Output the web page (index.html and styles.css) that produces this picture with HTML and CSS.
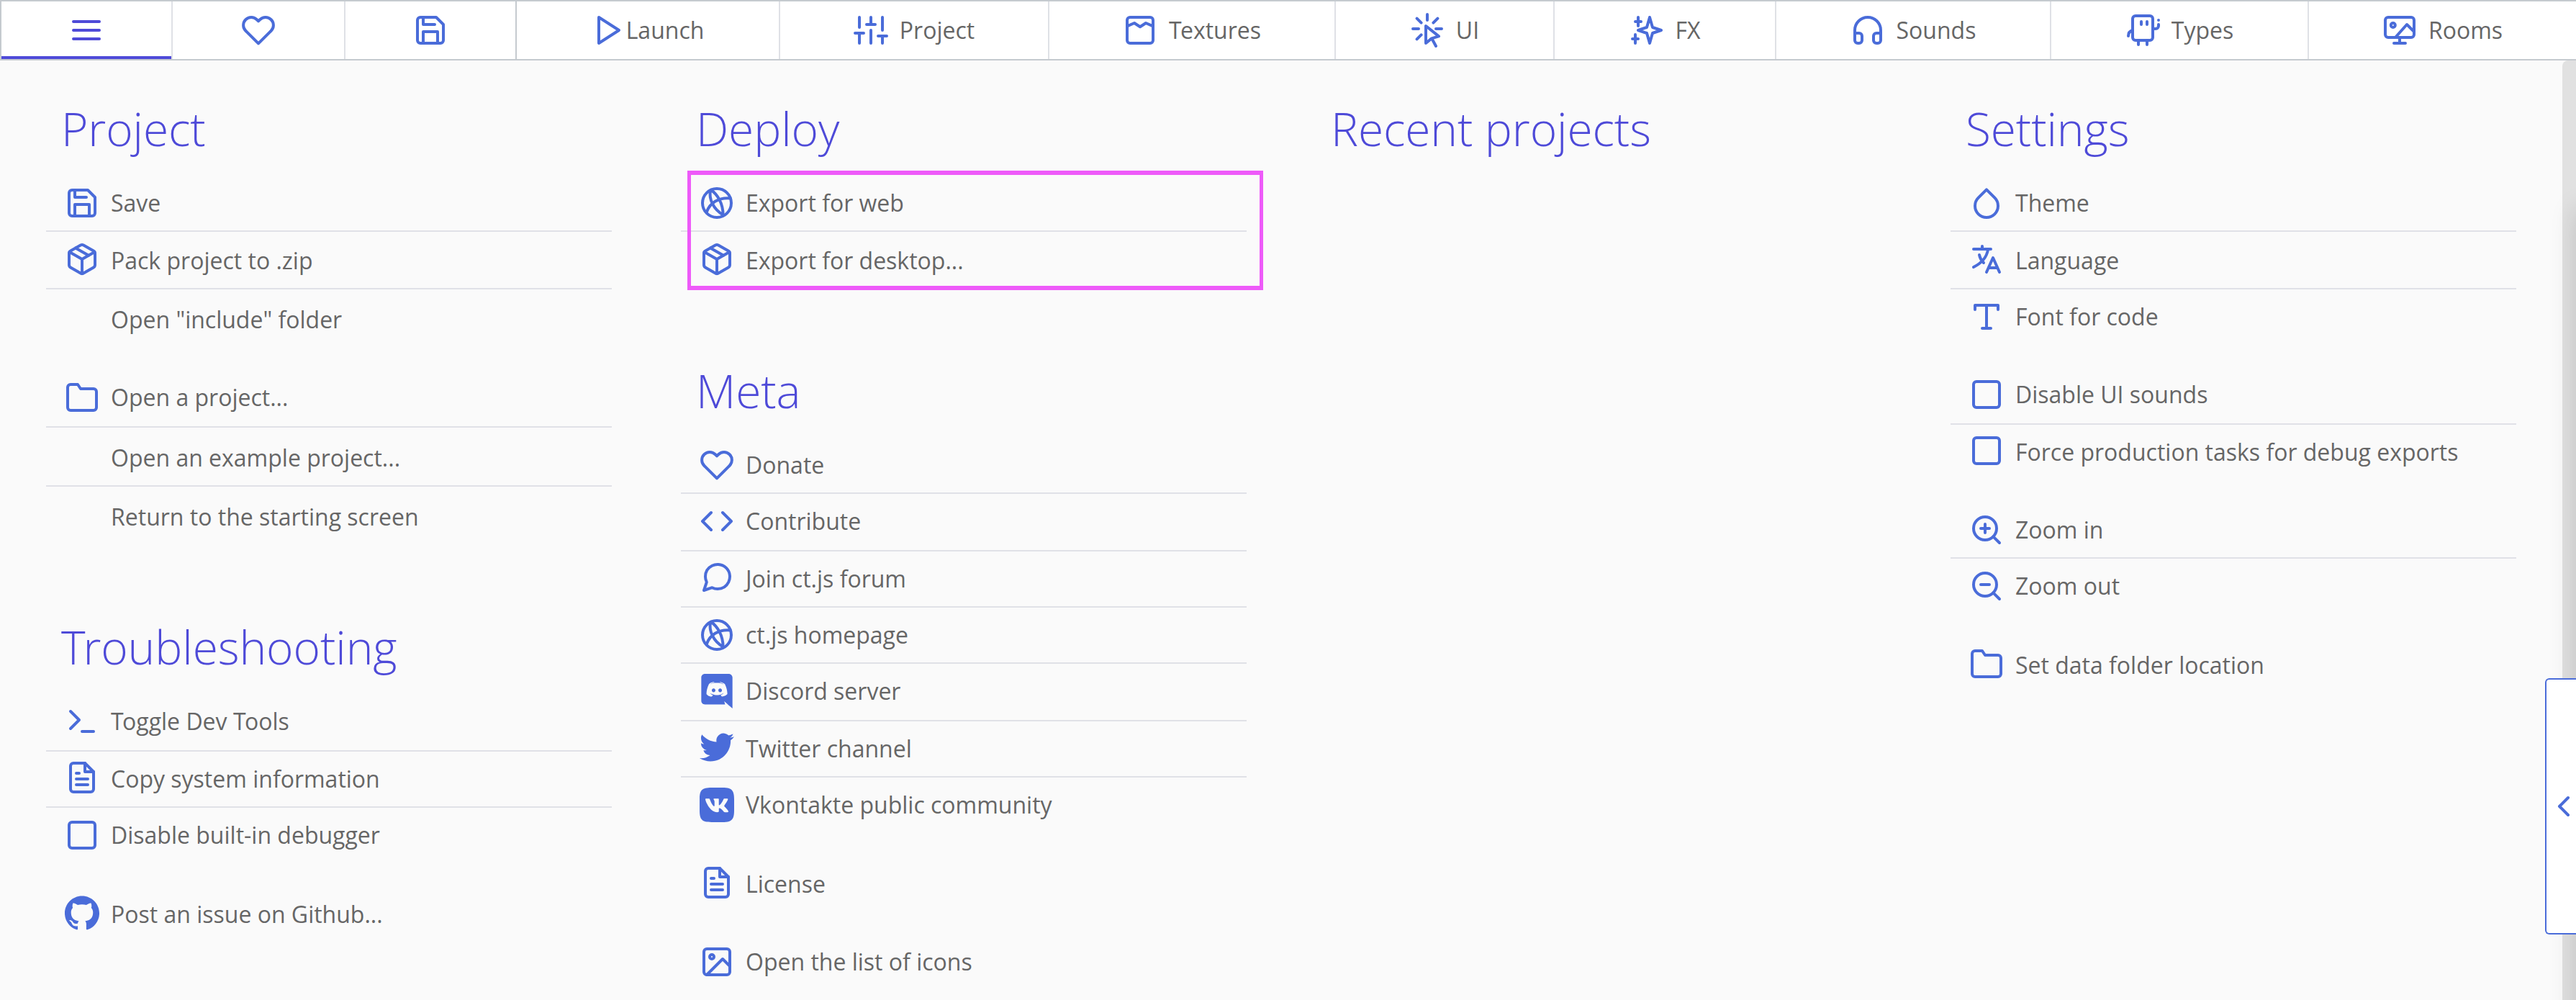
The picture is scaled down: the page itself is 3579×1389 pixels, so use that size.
FILE: index.html
```html
<!DOCTYPE html>
<html lang="en">
<head>
<meta charset="utf-8">
<title>ct.js</title>
<link rel="stylesheet" href="styles.css">
</head>
<body>
<svg class="sprite" aria-hidden="true">
  <symbol id="menu" viewBox="0 0 24 24"><path d="M3 12h18M3 6h18M3 18h18"/></symbol>
  <symbol id="heart" viewBox="0 0 24 24"><path d="M20.84 4.61a5.5 5.5 0 0 0-7.78 0L12 5.67l-1.06-1.06a5.5 5.5 0 0 0-7.78 7.78l1.06 1.06L12 21.23l7.78-7.78 1.06-1.06a5.5 5.5 0 0 0 0-7.78z"/></symbol>
  <symbol id="save" viewBox="0 0 24 24"><path d="M19 21H5a2 2 0 0 1-2-2V5a2 2 0 0 1 2-2h11l5 5v11a2 2 0 0 1-2 2z"/><path d="M17 21v-8H7v8M7 3v5h8"/></symbol>
  <symbol id="play" viewBox="0 0 24 24"><path d="M5 3l14 9-14 9z"/></symbol>
  <symbol id="sliders" viewBox="0 0 24 24"><path d="M4 21v-7M4 10V3M12 21v-9M12 8V3M20 21v-5M20 12V3M1 14h6M9 8h6M17 16h6"/></symbol>
  <symbol id="texture" viewBox="0 0 24 24"><rect x="3" y="3" width="18" height="18" rx="2"/><path d="M3 9.2l5-2.2 4 2.6L16 7l5 2.2"/></symbol>
  <symbol id="ui" viewBox="0 0 24 24"><path d="M12 1v4M2 11h4M18 11h4M4.8 3.8l3 3M19.2 3.8l-3 3M4.8 18.2l3-3M11 9v12l4-3.3 5-1.5zM15.3 18L18 23"/></symbol>
  <symbol id="sparkles" viewBox="0 0 24 24"><path d="M14 3l2 7 6 2-6 2-2 7-2-7-6-2 6-2zM6 3v6M4 6h4M4 15v6M2 18h4"/></symbol>
  <symbol id="headphones" viewBox="0 0 24 24"><path d="M3 18v-6a9 9 0 0 1 18 0v6"/><path d="M21 19a2 2 0 0 1-2 2h-1a2 2 0 0 1-2-2v-3a2 2 0 0 1 2-2h3zM3 19a2 2 0 0 0 2 2h1a2 2 0 0 0 2-2v-3a2 2 0 0 0-2-2H3z"/></symbol>
  <symbol id="type-char" viewBox="0 0 24 24"><rect x="5" y="2" width="14" height="17" rx="2"/><path d="M11 6v2M15 6v2M9 19v3M15 19v3M5 12c-2 .6-3 1.8-3 4M19 11h2a2 2 0 0 0 2-2V8M23 5v.01"/></symbol>
  <symbol id="room" viewBox="0 0 24 24"><rect x="2" y="3" width="20" height="14" rx="2"/><circle cx="7.4" cy="8.5" r="1.5"/><path d="M9 17l8-9 5 5M12 17v4M8 21h8"/></symbol>
  <symbol id="package" viewBox="0 0 24 24"><path d="M16.5 9.4l-9-5.19M21 16V8a2 2 0 0 0-1-1.73l-7-4a2 2 0 0 0-2 0l-7 4A2 2 0 0 0 3 8v8a2 2 0 0 0 1 1.73l7 4a2 2 0 0 0 2 0l7-4A2 2 0 0 0 21 16z"/><path d="M3.27 6.96L12 12.01l8.73-5.05M12 22.08V12"/></symbol>
  <symbol id="folder" viewBox="0 0 24 24"><path d="M22 19a2 2 0 0 1-2 2H4a2 2 0 0 1-2-2V5a2 2 0 0 1 2-2h5l2 3h9a2 2 0 0 1 2 2z"/></symbol>
  <symbol id="terminal" viewBox="0 0 24 24"><path d="M4 17l6-6-6-6M12 19h8"/></symbol>
  <symbol id="file" viewBox="0 0 24 24"><path d="M14 2H6a2 2 0 0 0-2 2v16a2 2 0 0 0 2 2h12a2 2 0 0 0 2-2V8z"/><path d="M14 2v6h6M16 13H8M16 17H8M10 9H8"/></symbol>
  <symbol id="square" viewBox="0 0 24 24"><rect x="3" y="3" width="18" height="18" rx="2"/></symbol>
  <symbol id="globe" viewBox="0 0 24 24"><circle cx="12" cy="12" r="10"/><path d="M7.6 3.1C6.2 9 9.600 16.500 16.300 20.200M8 3c4.500 3 8.300 9.500 8.300 17.200M4.800 18.500C7 12 13 8 21.300 8.700"/></symbol>
  <symbol id="code" viewBox="0 0 24 24"><path d="M16 18l6-6-6-6M8 6l-6 6 6 6"/></symbol>
  <symbol id="message" viewBox="0 0 24 24"><path d="M21 11.5a8.38 8.38 0 0 1-.9 3.8 8.5 8.5 0 0 1-7.6 4.7 8.38 8.38 0 0 1-3.8-.9L3 21l1.900-5.700a8.380 8.380 0 0 1-.9-3.800 8.500 8.500 0 0 1 4.700-7.600 8.380 8.380 0 0 1 3.800-.9h.5a8.480 8.480 0 0 1 8 8v.5z"/></symbol>
  <symbol id="image" viewBox="0 0 24 24"><rect x="3" y="3" width="18" height="18" rx="2"/><circle cx="8.5" cy="8.5" r="1.5"/><path d="M21 15l-5-5L5 21"/></symbol>
  <symbol id="droplet" viewBox="0 0 24 24"><path d="M12 2.69l5.66 5.66a8 8 0 1 1-11.310 0z"/></symbol>
  <symbol id="translate" viewBox="0 0 24 24"><path d="M3 5h12M9 3v2M13 5.500C12 11 8 15 3 17.500M7 9c.5 2.500 1.500 4 3 5.500M12 21l4.500-10L21 21M13.300 18h6.400"/></symbol>
  <symbol id="font" viewBox="0 0 24 24"><path d="M4 7V4h16v3M9 20h6M12 4v16"/></symbol>
  <symbol id="zoom-in" viewBox="0 0 24 24"><circle cx="11" cy="11" r="8"/><path d="M21 21l-4.350-4.350M11 8v6M8 11h6"/></symbol>
  <symbol id="zoom-out" viewBox="0 0 24 24"><circle cx="11" cy="11" r="8"/><path d="M21 21l-4.350-4.350M8 11h6"/></symbol>
  <symbol id="chevron-left" viewBox="0 0 24 24"><path d="M15 18l-6-6 6-6"/></symbol>
  <symbol id="github" viewBox="0 0 24 24"><path d="M12 .297c-6.630 0-12 5.373-12 12 0 5.303 3.438 9.800 8.205 11.385.6.113.820-.258.820-.577 0-.285-.010-1.040-.015-2.040-3.338.724-4.042-1.610-4.042-1.610C4.422 18.070 3.633 17.700 3.633 17.700c-1.087-.744.084-.729.084-.729 1.205.084 1.838 1.236 1.838 1.236 1.070 1.835 2.809 1.305 3.495.998.108-.776.417-1.305.760-1.605-2.665-.3-5.466-1.332-5.466-5.930 0-1.310.465-2.380 1.235-3.220-.135-.303-.540-1.523.105-3.176 0 0 1.005-.322 3.300 1.230.960-.267 1.980-.399 3-.405 1.020.006 2.040.138 3 .405 2.280-1.552 3.285-1.230 3.285-1.230.645 1.653.240 2.873.120 3.176.765.840 1.230 1.910 1.230 3.220 0 4.610-2.805 5.625-5.475 5.920.420.360.810 1.096.810 2.220 0 1.606-.015 2.896-.015 3.286 0 .315.210.690.825.570C20.565 22.092 24 17.592 24 12.297c0-6.627-5.373-12-12-12"/></symbol>
  <symbol id="discord" viewBox="0 0 24 24"><path d="M20.222 0c1.406 0 2.540 1.137 2.607 2.475V24l-2.677-2.273-1.470-1.338-1.604-1.398.670 2.205H3.710c-1.402 0-2.540-1.065-2.540-2.476V2.480C1.170 1.142 2.310.003 3.715.003h16.500L20.222 0zm-6.118 5.683h-.030l-.202.200c2.073.600 3.076 1.537 3.076 1.537-1.336-.668-2.540-1.002-3.744-1.137-.870-.135-1.740-.064-2.475 0h-.200c-.470 0-1.470.200-2.810.735-.467.203-.735.336-.735.336s1.002-1.002 3.210-1.537l-.135-.135s-1.672-.064-3.477 1.270c0 0-1.805 3.144-1.805 7.020 0 0 1 1.740 3.743 1.806 0 0 .400-.533.805-1.002-1.540-.468-2.140-1.404-2.140-1.404s.134.066.335.200h.060c.030 0 .044.015.060.030v.006c.016.016.030.030.060.030.330.136.660.270.930.400.466.202 1.065.403 1.800.536.930.135 1.996.200 3.210 0 .600-.135 1.200-.267 1.800-.535.390-.200.870-.400 1.397-.737 0 0-.600.936-2.205 1.404.330.466.795 1 .795 1 2.744-.060 3.810-1.800 3.870-1.726 0-3.870-1.815-7.020-1.815-7.020-1.635-1.214-3.165-1.260-3.435-1.260l.056-.020zm.168 4.413c.703 0 1.270.600 1.270 1.335 0 .740-.570 1.340-1.270 1.340-.700 0-1.270-.600-1.270-1.334.002-.740.573-1.338 1.270-1.338zm-4.543 0c.700 0 1.266.600 1.266 1.335 0 .740-.570 1.340-1.270 1.340-.700 0-1.270-.600-1.270-1.334 0-.740.570-1.338 1.270-1.338z"/></symbol>
  <symbol id="twitter" viewBox="0 0 24 24"><path d="M23.953 4.570a10 10 0 0 1-2.825.775 4.958 4.958 0 0 0 2.163-2.723c-.951.555-2.005.959-3.127 1.184a4.920 4.920 0 0 0-8.384 4.482C7.690 8.095 4.067 6.130 1.640 3.162a4.822 4.822 0 0 0-.666 2.475c0 1.710.870 3.213 2.188 4.096a4.904 4.904 0 0 1-2.228-.616v.060a4.923 4.923 0 0 0 3.946 4.827 4.996 4.996 0 0 1-2.212.085 4.936 4.936 0 0 0 4.604 3.417 9.867 9.867 0 0 1-6.102 2.105c-.390 0-.779-.023-1.170-.067a13.995 13.995 0 0 0 7.557 2.209c9.053 0 13.998-7.496 13.998-13.985 0-.210 0-.420-.015-.630A9.935 9.935 0 0 0 24 4.590z"/></symbol>
  <symbol id="vk" viewBox="0 0 24 24"><path d="M15.684 0H8.316C1.592 0 0 1.592 0 8.316v7.368C0 22.408 1.592 24 8.316 24h7.368C22.408 24 24 22.408 24 15.684V8.316C24 1.592 22.391 0 15.684 0zm3.692 17.123h-1.744c-.660 0-.864-.525-2.050-1.727-1.033-1-1.490-1.135-1.744-1.135-.356 0-.458.102-.458.593v1.575c0 .424-.135.678-1.253.678-1.846 0-3.896-1.118-5.335-3.202C4.624 10.857 4.030 8.570 4.030 8.096c0-.254.102-.491.593-.491h1.744c.440 0 .610.203.780.677.863 2.490 2.303 4.675 2.896 4.675.220 0 .322-.102.322-.660V9.721c-.068-1.186-.695-1.287-.695-1.710 0-.204.170-.407.440-.407h2.744c.373 0 .508.203.508.643v3.473c0 .372.170.508.271.508.220 0 .407-.136.813-.542 1.254-1.406 2.151-3.574 2.151-3.574.119-.254.322-.491.763-.491h1.744c.525 0 .644.270.525.643-.220 1.017-2.354 4.031-2.354 4.031-.186.305-.254.440 0 .780.186.254.796.779 1.203 1.253.745.847 1.320 1.558 1.473 2.050.170.490-.085.744-.576.744z"/></symbol>
</svg>

<nav class="tabs">
  <div class="tab tab-menu active"><svg class="icon"><use href="#menu"/></svg></div>
  <div class="tab tab-heart"><svg class="icon"><use href="#heart"/></svg></div>
  <div class="tab tab-save"><svg class="icon"><use href="#save"/></svg></div>
  <div class="tab tab-launch"><svg class="icon"><use href="#play"/></svg><span>Launch</span></div>
  <div class="tab tab-project"><svg class="icon"><use href="#sliders"/></svg><span>Project</span></div>
  <div class="tab tab-textures"><svg class="icon"><use href="#texture"/></svg><span><span class="kern">T</span>extures</span></div>
  <div class="tab tab-ui"><svg class="icon"><use href="#ui"/></svg><span>UI</span></div>
  <div class="tab tab-fx"><svg class="icon"><use href="#sparkles"/></svg><span>FX</span></div>
  <div class="tab tab-sounds"><svg class="icon"><use href="#headphones"/></svg><span>Sounds</span></div>
  <div class="tab tab-types"><svg class="icon"><use href="#type-char"/></svg><span>Types</span></div>
  <div class="tab tab-rooms"><svg class="icon"><use href="#room"/></svg><span>Rooms</span></div>
</nav>

<main class="page">
  <div class="columns">
    <div class="column">
      <section>
        <h1>Project</h1>
        <ul>
          <li><svg class="icon"><use href="#save"/></svg><span>Save</span></li>
          <li class="tall down"><svg class="icon"><use href="#package"/></svg><span>Pack project to .zip</span></li>
          <li class="plain"><span>Open "include" folder</span></li>
        </ul>
        <ul>
          <li class="tall"><svg class="icon"><use href="#folder"/></svg><span>Open a project...</span></li>
          <li class="plain"><span>Open an example project...</span></li>
          <li class="plain"><span>Return to the starting screen</span></li>
        </ul>
      </section>
      <section>
        <h1><span class="kern">T</span>roubleshooting</h1>
        <ul>
          <li class="tall"><svg class="icon"><use href="#terminal"/></svg><span><span class="kern">T</span>oggle Dev <span class="kern">T</span>ools</span></li>
          <li class="up"><svg class="icon"><use href="#file"/></svg><span>Copy system information</span></li>
          <li><svg class="icon"><use href="#square"/></svg><span>Disable built-in debugger</span></li>
        </ul>
        <ul>
          <li class="up"><svg class="icon solid"><use href="#github"/></svg><span>Post an issue on Github...</span></li>
        </ul>
      </section>
    </div>

    <div class="column">
      <section class="deploy">
        <h1>Deploy</h1>
        <ul>
          <li><svg class="icon"><use href="#globe"/></svg><span>Export for web</span></li>
          <li class="down"><svg class="icon"><use href="#package"/></svg><span>Export for desktop...</span></li>
        </ul>
        <div class="highlight"></div>
      </section>
      <section>
        <h1>Meta</h1>
        <ul>
          <li><svg class="icon"><use href="#heart"/></svg><span>Donate</span></li>
          <li class="tall"><svg class="icon"><use href="#code"/></svg><span>Contribute</span></li>
          <li class="up"><svg class="icon"><use href="#message"/></svg><span>Join ct.js forum</span></li>
          <li><svg class="icon"><use href="#globe"/></svg><span>ct.js homepage</span></li>
          <li class="tall"><svg class="icon solid"><use href="#discord"/></svg><span>Discord server</span></li>
          <li class="up"><svg class="icon solid"><use href="#twitter"/></svg><span>Twitter channel</span></li>
          <li><svg class="icon solid"><use href="#vk"/></svg><span>Vkontakte public community</span></li>
        </ul>
        <ul>
          <li class="short up"><svg class="icon"><use href="#file"/></svg><span>License</span></li>
        </ul>
        <ul>
          <li><svg class="icon"><use href="#image"/></svg><span>Open the list of icons</span></li>
        </ul>
      </section>
    </div>

    <div class="column">
      <section>
        <h1>Recent projects</h1>
      </section>
    </div>

    <div class="column">
      <section>
        <h1>Settings</h1>
        <ul>
          <li><svg class="icon"><use href="#droplet"/></svg><span>Theme</span></li>
          <li class="tall down"><svg class="icon"><use href="#translate"/></svg><span>Language</span></li>
          <li class="short"><svg class="icon"><use href="#font"/></svg><span>Font for code</span></li>
        </ul>
        <ul>
          <li class="tall"><svg class="icon"><use href="#square"/></svg><span>Disable UI sounds</span></li>
          <li class="short up"><svg class="icon"><use href="#square"/></svg><span>Force production tasks for debug exports</span></li>
        </ul>
        <ul>
          <li><svg class="icon"><use href="#zoom-in"/></svg><span>Zoom in</span></li>
          <li><svg class="icon"><use href="#zoom-out"/></svg><span>Zoom out</span></li>
        </ul>
        <ul>
          <li class="up"><svg class="icon"><use href="#folder"/></svg><span>Set data folder location</span></li>
        </ul>
      </section>
    </div>
  </div>
  <div class="scrollbar"></div>
</main>

<div class="drawer-shadow"></div>
<aside class="drawer-handle"><svg class="icon"><use href="#chevron-left"/></svg></aside>
</body>
</html>
```

FILE: styles.css
```css
* {
  box-sizing: border-box;
}

html,
body {
  margin: 0;
  height: 100%;
}

body {
  position: relative;
  display: flex;
  flex-direction: column;
  overflow: hidden;
  background: #fafafa;
  color: #666;
  font: 32px/48px "Open Sans", "Noto Sans", sans-serif;
}

.sprite {
  display: none;
}

.icon {
  flex: none;
  display: block;
  width: 48px;
  height: 48px;
  overflow: visible;
  fill: none;
  stroke: #4a6cd9;
  stroke-width: 2;
  stroke-linecap: round;
  stroke-linejoin: round;
}

.icon.solid {
  fill: #4a6cd9;
  stroke: none;
}

/* Tightens a capital T against the round letter after it */
.kern {
  letter-spacing: -0.05em;
}

/* Top tab bar */
.tabs {
  flex: none;
  display: flex;
  height: 84px;
  border: 2px solid #c5cacf;
  border-right: 0;
  background: #fff;
}

.tab {
  flex: none;
  display: flex;
  align-items: center;
  justify-content: center;
  gap: 16px;
  border-right: 2px solid #dfe1e6;
}

.tab-menu { width: 238px; }
.tab-heart { width: 240px; }
.tab-save { width: 238px; border-right-color: #c5cacf; }
.tab-launch { width: 366px; gap: 0; }
.tab-project { width: 374px; }
.tab-textures { width: 398px; }
.tab-ui { width: 304px; }
.tab-fx { width: 308px; }
.tab-sounds { width: 382px; }
.tab-types { width: 358px; }
.tab-rooms { flex: 1; border-right: 0; }

.tab.active {
  box-shadow: inset 0 -4px #4e4ad8;
}

.tab.active .icon {
  stroke: #4e4ad8;
}

/* Main menu */
.page {
  flex: 1;
  display: flex;
  justify-content: space-between;
  min-height: 0;
}

.columns {
  display: grid;
  grid-template-columns: repeat(4, 786px);
  column-gap: 96px;
  padding: 55px 0 0 64px;
}

.column {
  display: flex;
  flex-direction: column;
  gap: 103px;
}

h1 {
  margin: 0 0 25px 21px;
  color: #4e4ad8;
  font-size: 64px;
  font-weight: 300;
  line-height: 80px;
  letter-spacing: -0.1px;
}

ul {
  margin: 0;
  padding: 0;
  list-style: none;
}

ul + ul {
  margin-top: 32px;
}

li {
  display: flex;
  align-items: flex-start;
  gap: 16px;
  height: 78px;
  padding: 14px 0 0 26px;
  border-bottom: 2px solid #e0e1e7;
  white-space: nowrap;
}

li:last-child {
  border-bottom: 0;
}

li.tall {
  height: 80px;
}

li.short {
  height: 76px;
}

li.up .icon {
  margin-top: -2px;
}

li.down > span {
  margin-top: 2px;
}

li.plain {
  height: 82px;
  padding: 18px 0 0 90px;
}

li.plain:last-child {
  height: 80px;
}

.deploy {
  position: relative;
}

.highlight {
  position: absolute;
  top: 98px;
  left: 9px;
  width: 800px;
  height: 166px;
  border: 6px solid #ee5af9;
  border-width: 6px 5px;
}

.scrollbar {
  flex: none;
  width: 19px;
  border-top-left-radius: 8px;
  background: #e1e1e1;
}

/* Collapsed side drawer */
.drawer-shadow {
  position: absolute;
  top: 290px;
  bottom: -60px;
  left: 100%;
  width: 40px;
  box-shadow: 0 0 36px rgba(0, 0, 0, 0.15);
}

.drawer-handle {
  position: absolute;
  top: 942px;
  right: 0;
  width: 43px;
  height: 356px;
  display: flex;
  align-items: center;
  overflow: hidden;
  border: 2px solid #4a6cd9;
  border-right: 0;
  border-radius: 6px 0 0 6px;
  background: #fff;
}
```
